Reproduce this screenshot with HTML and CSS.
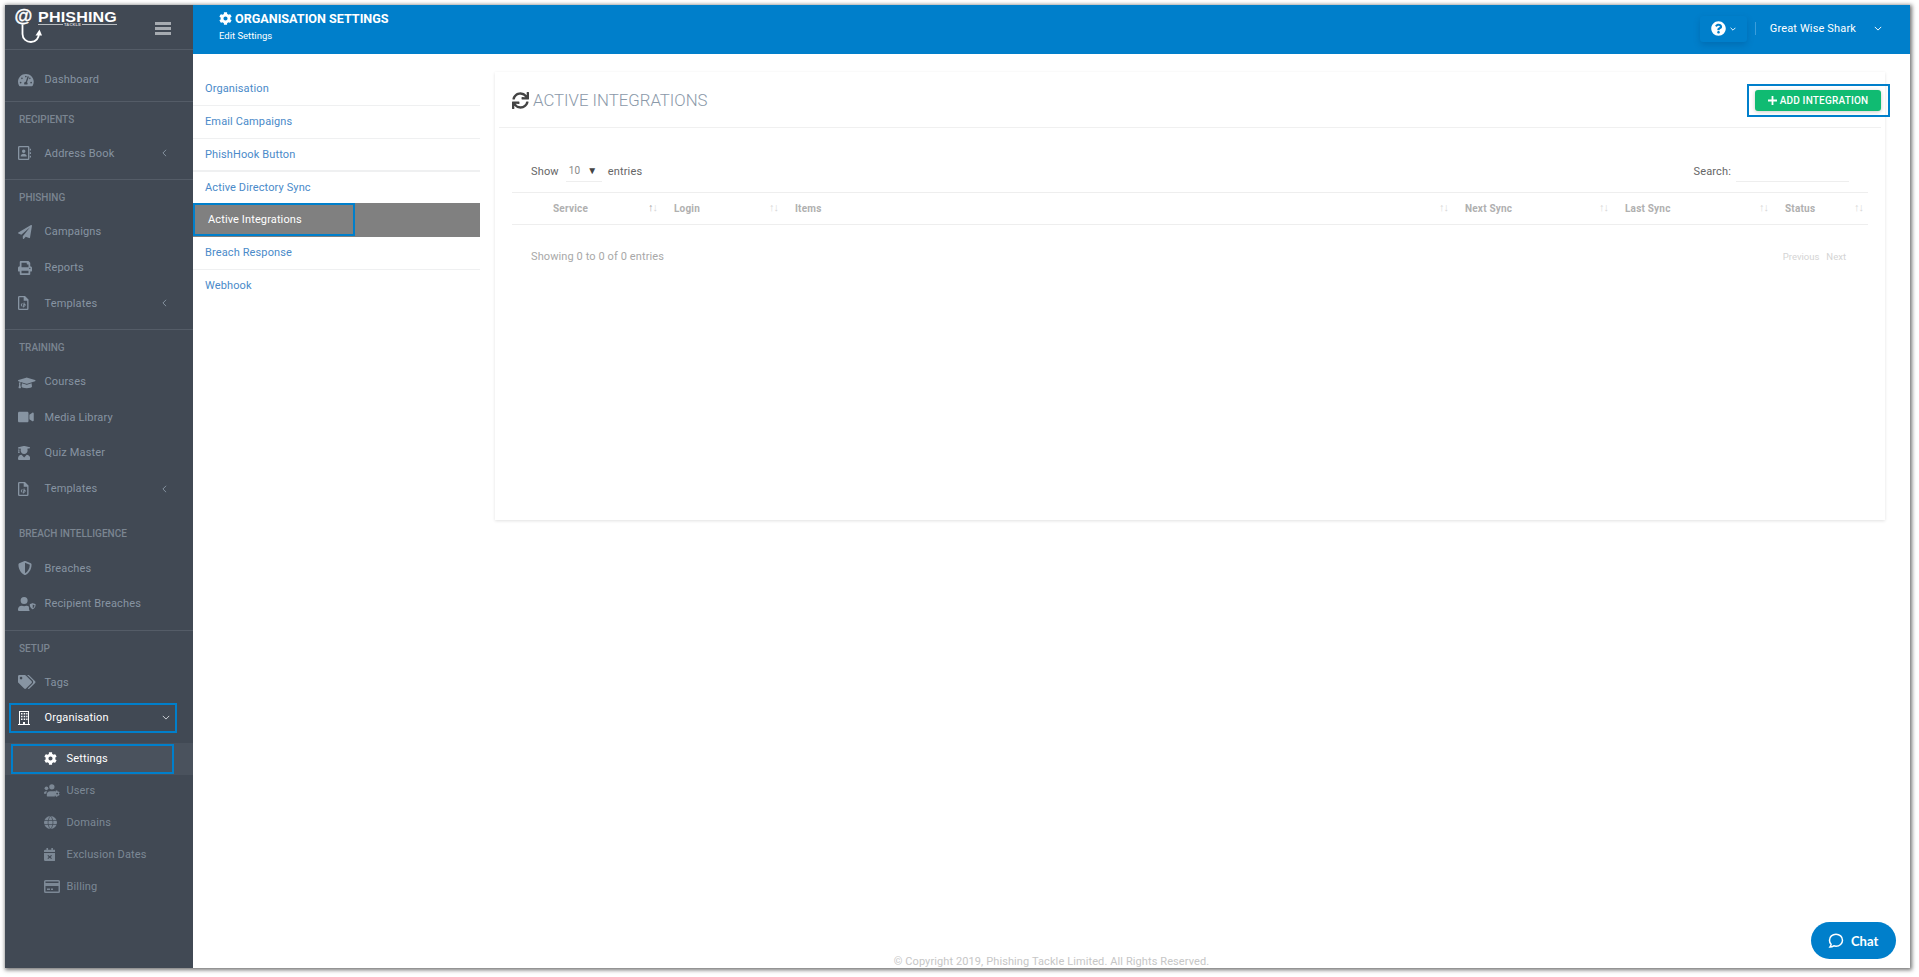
FILE: index.html
```html
<!DOCTYPE html>
<html lang="en">
<head>
<meta charset="utf-8">
<title>Organisation Settings</title>
<link rel="stylesheet" href="styles.css">
</head>
<body>
<div class="window">
  <aside class="sidebar">
    <div class="brand">
      <svg class="logo" viewBox="0 0 105 40" width="105" height="40">
        <text x="-0.500" y="13.500" class="logo-at" textLength="18" lengthAdjust="spacingAndGlyphs">@</text>
        <path d="M7.500 16.500v9.500c0 5 4 8 8.500 8 5 0 8-4 8-9" class="logo-hook"/>
        <path d="M20.500 27.500l4-6 2.500 6z" class="logo-barb"/>
        <text x="23" y="14" class="logo-name" textLength="79" lengthAdjust="spacingAndGlyphs">PHISHING</text>
        <path d="M23 16.500h25M67 16.500h35" class="logo-rule"/>
        <text x="49" y="18" class="logo-sub" textLength="17" lengthAdjust="spacingAndGlyphs">TACKLE</text>
      </svg>
      <div class="burger"><span></span><span></span><span></span></div>
    </div>

    <div class="group group-first">
      <a class="item"><span class="ic"><svg viewBox="0 0 576 512"><path d="M288 32C128.940 32 0 160.940 0 320c0 52.800 14.250 102.260 39.060 144.800 5.610 9.620 16.300 15.200 27.440 15.200h443c11.140 0 21.830-5.580 27.440-15.200C561.750 422.260 576 372.800 576 320c0-159.060-128.940-288-288-288zm0 64c14.710 0 26.580 10.130 30.320 23.650-1.110 2.260-2.640 4.230-3.450 6.670l-9.220 27.670c-5.130 3.490-10.970 6.010-17.640 6.010-17.670 0-32-14.330-32-32S270.330 96 288 96zM96 384c-17.670 0-32-14.330-32-32s14.330-32 32-32 32 14.330 32 32-14.330 32-32 32zm48-160c-17.670 0-32-14.330-32-32s14.330-32 32-32 32 14.330 32 32-14.330 32-32 32zm246.770-72.410l-61.330 184C343.130 347.330 352 364.540 352 384c0 11.720-3.380 22.550-8.880 32H232.880c-5.500-9.450-8.880-20.280-8.880-32 0-33.940 26.500-61.430 59.900-63.590l61.340-184.010c4.170-12.560 17.730-19.450 30.360-15.170 12.570 4.190 19.350 17.790 15.170 30.360zm14.660 57.200l15.520-46.550c3.470-1.290 7.130-2.230 11.050-2.230 17.670 0 32 14.330 32 32s-14.330 32-32 32c-11.380-.01-20.890-6.280-26.570-15.220zM480 384c-17.670 0-32-14.330-32-32s14.330-32 32-32 32 14.330 32 32-14.330 32-32 32z"/></svg></span>Dashboard</a>
    </div>

    <div class="group">
      <div class="label">RECIPIENTS</div>
      <a class="item"><span class="ic"><svg viewBox="0 0 15 16"><path fill-rule="evenodd" d="M1.500 0h10A1.500 1.500 0 0 1 13 1.500v13a1.500 1.500 0 0 1-1.500 1.500h-10A1.500 1.500 0 0 1 0 14.500v-13A1.500 1.500 0 0 1 1.500 0zm.2 1.500a.3.3 0 0 0-.2.200v12.600c0 .1.100.2.200.2h9.600c.1 0 .2-.1.200-.2V1.700a.3.3 0 0 0-.2-.2zM6.500 4a2 2 0 1 1 0 4 2 2 0 0 1 0-4zM3 12c0-2 1.500-3.200 3.500-3.200S10 10 10 12zM13.500 3H15v2h-1.500zm0 4H15v2h-1.500zm0 4H15v2h-1.500z"/></svg></span>Address Book<svg class="chev" viewBox="0 0 6 10"><path d="M5 1L1 5l4 4"/></svg></a>
    </div>

    <div class="group">
      <div class="label">PHISHING</div>
      <a class="item"><span class="ic"><svg viewBox="0 0 512 512"><path d="M476 3.200L12.500 270.600c-18.100 10.400-15.800 35.600 2.200 43.200L121 358.400l287.300-253.200c5.500-4.900 13.300 2.600 8.600 8.300L176 407v80.500c0 23.600 28.500 32.900 42.500 15.800L282 426l124.600 52.200c14.200 6 30.400-2.900 33-18.200l72-432C515 7.800 493.300-6.800 476 3.200z"/></svg></span>Campaigns</a>
      <a class="item"><span class="ic"><svg viewBox="0 0 512 512"><path d="M448 192V77.250c0-8.490-3.370-16.620-9.370-22.630L393.370 9.370c-6-6-14.140-9.370-22.630-9.370H96C78.330 0 64 14.330 64 32v160c-35.350 0-64 28.650-64 64v112c0 8.840 7.160 16 16 16h48v96c0 17.670 14.330 32 32 32h320c17.670 0 32-14.330 32-32v-96h48c8.840 0 16-7.160 16-16V256c0-35.350-28.650-64-64-64zm-64 256H128v-96h256v96zm0-224H128V64h192v48c0 8.840 7.160 16 16 16h48v96zm48 72c-13.250 0-24-10.750-24-24 0-13.260 10.750-24 24-24s24 10.740 24 24c0 13.250-10.750 24-24 24z"/></svg></span>Reports</a>
      <a class="item"><span class="ic"><svg viewBox="0 0 12 16"><path fill-rule="evenodd" d="M1.500 0H8l4 4v10.500a1.500 1.500 0 0 1-1.500 1.500h-9A1.500 1.500 0 0 1 0 14.500v-13A1.500 1.500 0 0 1 1.500 0zm0 1.500v13h9V5.500H6.500v-4zM4.500 8L3 10.200l1.500 2.200.8-.6-1-1.600 1-1.600zm3 0l-.8.600 1 1.600-1 1.600.8.600L9 10.200zM6.500 7.500l-1 5.500h1l1-5.500z"/></svg></span>Templates<svg class="chev" viewBox="0 0 6 10"><path d="M5 1L1 5l4 4"/></svg></a>
    </div>

    <div class="group">
      <div class="label">TRAINING</div>
      <a class="item"><span class="ic"><svg viewBox="0 0 640 512"><path d="M622.300 185.400L341.500 99.100a72 72 0 0 0-43 0L17.700 185.400c-23.600 7.200-23.600 38 0 45.200l49 15c-10.700 13.300-17.300 29.500-18 47.300C38.900 298.600 32 308.500 32 320c0 10.400 5.700 19.200 14 24.800L20.400 460.400C18.200 470.500 25.900 480 36.200 480h55.600c10.300 0 18-9.500 15.800-19.600L82 344.800c8.300-5.600 14-14.400 14-24.800 0-11.200-6.500-20.700-15.800-26.300.8-15.200 8.500-28.500 20.300-37L298.500 317c14 4.300 29 4.300 43 0l280.800-86.400c23.600-7.200 23.600-38 0-45.200zM352 347.600a72 72 0 0 1-64 0l-145-44.600L128 416c0 35.300 86 64 192 64s192-28.700 192-64l-15-113z"/></svg></span>Courses</a>
      <a class="item"><span class="ic"><svg viewBox="0 0 576 512"><path d="M336.200 64H47.800C21.400 64 0 85.400 0 111.800v288.400C0 426.600 21.400 448 47.800 448h288.400c26.400 0 47.800-21.400 47.800-47.800V111.800c0-26.400-21.400-47.800-47.800-47.800zm189.400 37.700L416 177.300v157.400l109.600 75.500c21.200 14.600 50.400-.3 50.400-25.800V127.500c0-25.400-29.100-40.400-50.400-25.800z"/></svg></span>Media Library</a>
      <a class="item"><span class="ic"><svg viewBox="0 0 448 512"><path d="M319.400 320.600L224 416l-95.400-95.400C57.100 323.700 0 382.200 0 454.400v9.600c0 26.500 21.500 48 48 48h352c26.500 0 48-21.500 48-48v-9.600c0-72.200-57.100-130.700-128.600-133.800zM13.600 79.800l6.400 1.500v58.400c-7 4.200-12 11.500-12 20.300 0 8.400 4.600 15.400 11.100 19.700L3.500 242c-1.700 6.900 2.100 14 7.600 14h41.800c5.500 0 9.300-7.100 7.600-14l-15.600-62.300C51.400 175.400 56 168.400 56 160c0-8.800-5-16.100-12-20.300V87.100l66 15.900c-8.600 17.200-14 36.400-14 57 0 70.700 57.300 128 128 128s128-57.300 128-128c0-20.600-5.300-39.800-14-57l96.300-23.200c18.200-4.400 18.200-27.100 0-31.500l-190.400-46c-13-3.100-26.700-3.100-39.700 0L13.600 48.200c-18.100 4.400-18.100 27.200 0 31.600z"/></svg></span>Quiz Master</a>
      <a class="item"><span class="ic"><svg viewBox="0 0 12 16"><path fill-rule="evenodd" d="M1.500 0H8l4 4v10.500a1.500 1.500 0 0 1-1.500 1.500h-9A1.500 1.500 0 0 1 0 14.500v-13A1.500 1.500 0 0 1 1.500 0zm0 1.500v13h9V5.500H6.500v-4zM4.500 8L3 10.200l1.500 2.200.8-.6-1-1.600 1-1.600zm3 0l-.8.600 1 1.600-1 1.600.8.600L9 10.200zM6.500 7.500l-1 5.500h1l1-5.500z"/></svg></span>Templates<svg class="chev" viewBox="0 0 6 10"><path d="M5 1L1 5l4 4"/></svg></a>
      <div class="label label-late">BREACH INTELLIGENCE</div>
      <a class="item"><span class="ic"><svg viewBox="0 0 512 512"><path d="M466.500 83.700l-192-80a48.150 48.150 0 0 0-36.900 0l-192 80C27.700 91.100 16 108.600 16 128c0 198.500 114.500 335.700 221.500 380.300 11.800 4.900 25.100 4.900 36.900 0C360.100 472.600 496 349.300 496 128c0-19.400-11.700-36.900-29.500-44.300zM256.100 446.300l-.1-381 175.900 73.300c-3.300 151.400-82.100 261.100-175.800 307.700z"/></svg></span>Breaches</a>
      <a class="item"><span class="ic"><svg viewBox="0 0 640 512"><path d="M224 256a128 128 0 1 0 0-256 128 128 0 0 0 0 256zm96 64h-17c-24 11-50 16-79 16s-55-5-79-16h-17C57 320 0 377 0 448v16c0 26 21 48 48 48h352c10 0 20-3 28-9-17-24-28-62-28-119v-30c-20-21-48-34-80-34z"/><path d="M530 224l-90 36c-6 3-10 8-10 15 0 89 51 151 100 173 5 2 10 2 15 0 49-22 100-84 100-173 0-7-4-12-10-15l-90-36c-5-2-10-2-15 0zm8 52l67 27c-3 59-34 93-67 110z"/></svg></span>Recipient Breaches</a>
    </div>

    <div class="group group-last">
      <div class="label">SETUP</div>
      <a class="item"><span class="ic"><svg viewBox="0 0 640 512"><path d="M497.941 225.941L286.059 14.059A48 48 0 0 0 252.118 0H48C21.490 0 0 21.490 0 48v204.118a48 48 0 0 0 14.059 33.941l211.882 211.882c18.744 18.745 49.136 18.746 67.882 0l204.118-204.118c18.745-18.745 18.745-49.137 0-67.882zM112 160c-26.510 0-48-21.490-48-48s21.490-48 48-48 48 21.490 48 48-21.490 48-48 48zm513.941 133.823L421.823 497.941c-18.745 18.745-49.137 18.745-67.882 0l-.36-.36L527.640 323.522c16.999-16.999 26.360-39.600 26.360-63.640s-9.362-46.641-26.360-63.640L331.397 0h48.721a48 48 0 0 1 33.941 14.059l211.882 211.882c18.745 18.745 18.745 49.137 0 67.882z"/></svg></span>Tags</a>
      <a class="item item-open"><span class="ic"><svg viewBox="0 0 12 14"><path fill-rule="evenodd" d="M1 0h10v13h1v1H0v-1h1zm1 1v12h3v-2h2v2h3V1zm1 1h1.500v1.500H3zm2.700 0h1.500v1.500H5.700zM8.200 2h1.300v1.500H8.200zM3 4.700h1.500v1.500H3zm2.700 0h1.500v1.500H5.700zm2.500 0h1.300v1.500H8.200zM3 7.400h1.500v1.500H3zm2.700 0h1.500v1.500H5.700zm2.500 0h1.300v1.500H8.200z"/></svg></span>Organisation<svg class="chev chev-down" viewBox="0 0 10 6"><path d="M1 1l4 4 4-4"/></svg></a>
      <div class="subnav">
        <a class="sub sub-active"><span class="ic"><svg viewBox="0 0 512 512"><path d="M487.400 315.700l-42.600-24.600c4.300-23.200 4.300-47 0-70.200l42.600-24.600c4.900-2.800 7.100-8.600 5.500-14-11.100-35.600-30-67.800-54.700-94.600-3.800-4.100-10-5.100-14.800-2.300L380.800 110c-17.900-15.400-38.500-27.300-60.800-35.100V25.800c0-5.600-3.900-10.500-9.400-11.700-36.700-8.200-74.300-7.800-109.200 0-5.500 1.200-9.400 6.100-9.400 11.700V75c-22.200 7.900-42.800 19.800-60.800 35.100L88.700 85.500c-4.900-2.800-11-1.900-14.800 2.300-24.700 26.700-43.600 58.900-54.700 94.600-1.700 5.400.6 11.200 5.500 14L67.300 221c-4.300 23.200-4.300 47 0 70.200l-42.600 24.600c-4.900 2.800-7.100 8.600-5.500 14 11.100 35.600 30 67.800 54.700 94.600 3.800 4.100 10 5.100 14.800 2.300l42.600-24.600c17.900 15.400 38.500 27.300 60.800 35.100v49.200c0 5.600 3.900 10.500 9.400 11.700 36.700 8.200 74.300 7.800 109.200 0 5.500-1.200 9.400-6.100 9.400-11.700v-49.200c22.200-7.900 42.800-19.800 60.800-35.100l42.600 24.600c4.900 2.800 11 1.900 14.800-2.300 24.700-26.700 43.600-58.900 54.700-94.600 1.500-5.500-.7-11.300-5.600-14.100zM256 336c-44.100 0-80-35.900-80-80s35.900-80 80-80 80 35.900 80 80-35.900 80-80 80z"/></svg></span>Settings</a>
        <a class="sub"><span class="ic"><svg viewBox="0 0 640 512"><circle cx="96" cy="170" r="72"/><path d="M0 372c0-50 30-86 70-86h50c-18 25-28 60-28 96H20C8 382 0 380 0 372z"/><circle cx="310" cy="110" r="104"/><path d="M110 440c0-85 50-150 130-150h160c20 0 35 3 50 10-30 40-40 100-20 192H130c-12 0-20-10-20-20z"/><path d="M610 407l-20-11c2-12 2-24 0-36l20-11c3-2 4-4 3-7-5-18-15-34-28-48-2-2-5-2-7-1l-20 12c-9-8-19-14-30-18v-23c0-3-2-5-5-6-18-4-37-4-55 0-3 1-5 3-5 6v23c-11 4-21 10-30 18l-20-12c-2-1-5-1-7 1-13 14-23 30-28 48-1 3 0 5 3 7l20 11c-2 12-2 24 0 36l-20 11c-3 2-4 4-3 7 5 18 15 34 28 48 2 2 5 2 7 1l20-12c9 8 19 14 30 18v23c0 3 2 5 5 6 18 4 37 4 55 0 3-1 5-3 5-6v-23c11-4 21-10 30-18l20 12c2 1 5 1 7-1 13-14 23-30 28-48 1-3 0-5-3-7zm-90 9a38 38 0 1 1 0-76 38 38 0 0 1 0 76z"/></svg></span>Users</a>
        <a class="sub"><span class="ic"><svg viewBox="0 0 16 16"><path d="M8 0a8 8 0 1 1 0 16A8 8 0 0 1 8 0z"/><path class="globe-lines" d="M0 5.500h16M0 10.500h16M8 0c-4 4-4 12 0 16M8 0c4 4 4 12 0 16"/></svg></span>Domains</a>
        <a class="sub"><span class="ic"><svg viewBox="0 0 14 16"><path fill-rule="evenodd" d="M3 0h2v2h4V0h2v2h1.500A1.500 1.500 0 0 1 14 3.500V5H0V3.500A1.500 1.500 0 0 1 1.500 2H3zM0 6h14v8.500a1.500 1.500 0 0 1-1.500 1.500h-11A1.500 1.500 0 0 1 0 14.500zm5.200 2.500L4.200 9.500 6 11l-1.800 1.500 1 1L7 12l1.800 1.500 1-1L8 11l1.800-1.500-1-1L7 10z"/></svg></span>Exclusion Dates</a>
        <a class="sub"><span class="ic"><svg viewBox="0 0 16 13"><path fill-rule="evenodd" d="M1.500 0h13A1.500 1.500 0 0 1 16 1.500v10a1.500 1.500 0 0 1-1.500 1.500h-13A1.500 1.500 0 0 1 0 11.500v-10A1.500 1.500 0 0 1 1.500 0zm0 1.500V3h13V1.500zm0 4.500v5.500h13V6zM3 8.500h3V10H3zm4 0h2V10H7z"/></svg></span>Billing</a>
      </div>
    </div>
  </aside>

  <div class="main">
    <header class="topbar">
      <div class="top-title">
        <h1><svg viewBox="0 0 512 512"><path d="M487.400 315.700l-42.600-24.600c4.300-23.200 4.300-47 0-70.200l42.600-24.600c4.900-2.800 7.100-8.600 5.500-14-11.100-35.600-30-67.800-54.700-94.600-3.800-4.100-10-5.100-14.800-2.300L380.800 110c-17.900-15.400-38.500-27.300-60.800-35.100V25.800c0-5.600-3.900-10.500-9.400-11.700-36.700-8.200-74.300-7.800-109.200 0-5.500 1.200-9.400 6.100-9.400 11.700V75c-22.200 7.900-42.800 19.800-60.800 35.100L88.700 85.500c-4.900-2.800-11-1.900-14.800 2.300-24.700 26.700-43.600 58.900-54.700 94.600-1.700 5.400.6 11.200 5.500 14L67.300 221c-4.300 23.200-4.300 47 0 70.200l-42.600 24.600c-4.900 2.800-7.100 8.600-5.500 14 11.100 35.600 30 67.800 54.700 94.600 3.800 4.100 10 5.100 14.800 2.300l42.600-24.600c17.900 15.400 38.500 27.300 60.800 35.100v49.200c0 5.600 3.900 10.500 9.400 11.700 36.700 8.200 74.300 7.800 109.200 0 5.500-1.200 9.400-6.100 9.400-11.700v-49.200c22.200-7.900 42.800-19.800 60.800-35.100l42.600 24.600c4.900 2.800 11 1.900 14.800-2.300 24.700-26.700 43.600-58.900 54.700-94.600 1.500-5.500-.7-11.300-5.600-14.100zM256 336c-44.100 0-80-35.900-80-80s35.900-80 80-80 80 35.900 80 80-35.900 80-80 80z"/></svg>ORGANISATION SETTINGS</h1>
        <p>Edit Settings</p>
      </div>
      <div class="top-right">
        <div class="help"><svg class="help-q" viewBox="0 0 512 512"><path d="M504 256c0 136.997-111.043 248-248 248S8 392.997 8 256C8 119.083 119.043 8 256 8s248 111.083 248 248zM262.655 90c-54.497 0-89.255 22.957-116.549 63.758-3.536 5.286-2.353 12.415 2.715 16.258l34.699 26.310c5.205 3.947 12.621 3.008 16.665-2.122 17.864-22.658 30.113-35.797 57.303-35.797 20.429 0 45.698 13.148 45.698 32.958 0 14.976-12.363 22.667-32.534 33.976C247.128 238.528 216 254.941 216 296v4c0 6.627 5.373 12 12 12h56c6.627 0 12-5.373 12-12v-1.333c0-28.462 83.186-29.647 83.186-106.667 0-58.002-60.165-102-116.531-102zM256 338c-25.365 0-46 20.635-46 46 0 25.364 20.635 46 46 46s46-20.636 46-46c0-25.365-20.635-46-46-46z"/></svg><svg class="help-chev" viewBox="0 0 10 6"><path d="M1 1l4 4 4-4"/></svg></div>
        <span class="user">Great Wise Shark</span>
        <svg class="user-chev" viewBox="0 0 10 6"><path d="M1 1l4 4 4-4"/></svg>
      </div>
    </header>

    <div class="content">
      <nav class="settings-nav">
        <a>Organisation</a>
        <a>Email Campaigns</a>
        <a class="thick">PhishHook Button</a>
        <a class="plain">Active Directory Sync</a>
        <a class="active"><span>Active Integrations</span></a>
        <a>Breach Response</a>
        <a class="plain">Webhook</a>
      </nav>

      <section class="card">
        <div class="card-head">
          <h2><svg viewBox="0 0 512 512"><path d="M440.650 12.570l4 82.770A247.160 247.160 0 0 0 255.830 8C134.730 8 33.910 94.920 12.290 209.820A12 12 0 0 0 24.090 224h49.050a12 12 0 0 0 11.670-9.260 175.910 175.910 0 0 1 317-56.940l-101.460-4.860a12 12 0 0 0-12.570 12v47.410a12 12 0 0 0 12 12H500a12 12 0 0 0 12-12V12a12 12 0 0 0-12-12h-47.370a12 12 0 0 0-11.980 12.570zM255.830 432a175.610 175.610 0 0 1-146-77.800l101.800 4.870a12 12 0 0 0 12.570-12v-47.400a12 12 0 0 0-12-12H12a12 12 0 0 0-12 12V500a12 12 0 0 0 12 12h47.350a12 12 0 0 0 12-12.600l-4.150-82.570A247.170 247.170 0 0 0 255.830 504c121.110 0 221.930-86.920 243.550-201.820a12 12 0 0 0-11.800-14.180h-49.050a12 12 0 0 0-11.670 9.260A175.860 175.860 0 0 1 255.830 432z"/></svg>ACTIVE INTEGRATIONS</h2>
          <button class="add"><svg viewBox="0 0 10 10"><path d="M4 0h2v4h4v2H6v4H4V6H0V4h4z"/></svg>ADD INTEGRATION</button>
        </div>
        <div class="card-body">
          <div class="controls">
            <div class="length">Show<span class="select"><span>10</span><i>▼</i></span>entries</div>
            <div class="search">Search:<span class="search-input"></span></div>
          </div>
          <div class="table-head">
            <div class="th th-first"><span>Service</span><span class="sort"><b>↑</b><em>↓</em></span></div>
            <div class="th"><span>Login</span><span class="sort"><em>↑</em><em>↓</em></span></div>
            <div class="th"><span>Items</span><span class="sort"><em>↑</em><em>↓</em></span></div>
            <div class="th"><span>Next Sync</span><span class="sort"><em>↑</em><em>↓</em></span></div>
            <div class="th"><span>Last Sync</span><span class="sort"><em>↑</em><em>↓</em></span></div>
            <div class="th"><span>Status</span><span class="sort"><em>↑</em><em>↓</em></span></div>
          </div>
          <div class="table-foot">
            <span class="info">Showing 0 to 0 of 0 entries</span>
            <span class="pager"><span>Previous</span><span>Next</span></span>
          </div>
        </div>
      </section>
    </div>
    <footer class="copy">© Copyright 2019, Phishing Tackle Limited. All Rights Reserved.</footer>
  </div>
</div>
<button class="chat"><svg viewBox="0 0 16 16"><path d="M8 1.200c3.600 0 6.500 2.600 6.500 6s-2.900 6-6.500 6c-.8 0-1.500-.1-2.200-.4-1 .7-2.300 1.200-3.800 1.200.6-.8 1-1.600 1.100-2.600C1.900 10.300 1.500 8.800 1.500 7.200c0-3.400 2.900-6 6.500-6z"/></svg>Chat</button>
</body>
</html>
```

FILE: styles.css
```css
* { box-sizing: border-box; }
html, body { margin: 0; height: 100%; }
body {
  width: 1919px;
  height: 977px;
  padding: 5px 9px 9px 5px;
  background: #fff;
  font-family: Roboto, "Liberation Sans", sans-serif;
  overflow: hidden;
  position: relative;
}
a { display: block; text-decoration: none; }
svg { display: block; }

.window {
  display: flex;
  height: 963px;
  background: #fff;
  box-shadow: 1px 1px 4px 1px rgba(0,0,0,.55);
}

/* sidebar */
.sidebar {
  width: 188px;
  flex: none;
  background: #414954;
  color: #8794a2;
  font-size: 11px;
  letter-spacing: .15px;
}
.brand {
  height: 45px;
  display: flex;
  align-items: flex-start;
  border-bottom: 1px solid #545c67;
  position: relative;
  padding: 3px 0 0 10px;
}
.logo { flex: none; overflow: visible; }
.logo-at { font: 700 18px "Liberation Sans", sans-serif; fill: #fff; stroke: #fff; stroke-width: .3; }
.logo-hook { fill: none; stroke: #fff; stroke-width: 1.800; }
.logo-barb { fill: #fff; }
.logo-name { font: 700 14px "Liberation Sans", sans-serif; fill: #fff; }
.logo-rule { stroke: #d8dadd; stroke-width: .8; fill: none; }
.logo-sub { font: 700 3.500px "Liberation Sans", sans-serif; fill: #cfd2d6; }
.burger { margin: 14px 0 0 35px; width: 16px; display: flex; flex-direction: column; gap: 2px; }
.burger span { height: 3px; background: #a6abb1; }

.group { padding: 7px 0 8px; border-bottom: 1px solid #545c67; }
.group-first { padding: 12px 0 3px; }
.group-last { border-bottom: 0; }
.label {
  height: 21px;
  line-height: 21px;
  margin-bottom: 6px;
  padding-left: 14px;
  font-size: 10px;
  font-weight: 500;
  letter-spacing: 0;
  color: #7b8591;
}
.label-late { margin-top: 17px; margin-bottom: 6px; }
.item {
  height: 35.600px;
  display: flex;
  align-items: center;
  padding: 0 0 0 13px;
  color: #8794a2;
}
.ic { flex: none; width: 26.500px; height: 16px; display: flex; justify-content: flex-start; align-items: center; }
.ic svg { flex: none; width: auto; height: 14px; fill: currentColor; }
.chev { margin-left: auto; margin-right: 26px; width: 5px; height: 8px; fill: none; stroke: #8794a2; stroke-width: 1.200; }
.chev-down { width: 8px; height: 5px; margin-right: 23px; stroke: #d0d4d8; }
.item-open { color: #fff; position: relative; }
.item-open::after { content: ""; position: absolute; left: 4px; right: 16px; top: 3px; bottom: 3px; border: 2px solid #007fcb; }

.subnav { margin-top: 7px; }
.sub {
  height: 32px;
  display: flex;
  align-items: center;
  padding-left: 39px;
  color: #7c8895;
  position: relative;
}
.sub .ic { width: 22.500px; }
.sub .ic svg { height: 13px; }
.sub-active { background: #4a525d; color: #fff; }
.sub-active::after { content: ""; position: absolute; left: 6px; right: 19px; top: 1px; bottom: 1px; border: 2px solid #007fcb; }
.globe-lines { fill: none; stroke: #414954; stroke-width: .9; }

/* main */
.main { flex: 1; min-width: 0; display: flex; flex-direction: column; position: relative; }
.topbar {
  height: 49px;
  flex: none;
  background: #007fcb;
  color: #fff;
  display: flex;
  justify-content: space-between;
  padding-left: 26px;
}
.top-title h1 {
  margin: 6px 0 0;
  display: flex;
  align-items: center;
  font-size: 12.600px;
  font-weight: 700;
  line-height: 15px;
}
.top-title h1 svg { width: 13px; height: 13px; fill: #fff; margin-right: 3px; }
.top-title p { margin: 4px 0 0; font-size: 9.500px; line-height: 12px; }
.top-right { display: flex; align-items: center; height: 47px; color: #fff; }
.help {
  display: flex; align-items: center;
  width: 47px; height: 26px;
  padding-left: 11px;
  border-radius: 3px;
  box-shadow: 0 3px 6px rgba(0,60,110,.25);
}
.help-q { width: 15px; height: 15px; fill: #fff; }
.help-chev { width: 6px; height: 4px; margin-left: 4px; fill: none; stroke: #fff; stroke-width: 1.500; }
.user {
  margin-left: 8px;
  padding-left: 14px;
  border-left: 1px solid #3b9ddb;
  font-size: 11px;
  line-height: 13px;
  letter-spacing: .15px;
}
.user-chev { width: 8px; height: 5px; margin: 0 28px 0 18px; fill: none; stroke: #fff; stroke-width: 1.200; }

.content { flex: 1; display: flex; align-items: flex-start; min-height: 0; }
.settings-nav {
  width: 287px;
  flex: none;
  padding-top: 19px;
  font-size: 11px;
  letter-spacing: .12px;
}
.settings-nav a {
  height: 33px;
  line-height: 32px;
  padding-left: 12px;
  color: #4a8ac9;
  border-bottom: 1px solid #eff0f1;
}
.settings-nav a.thick { border-bottom: 2px solid #eff0f1; }
.settings-nav a.plain { border-bottom: 0; }
.settings-nav a.active {
  padding: 0;
  height: 34px;
  margin-top: -2.500px;
  background: #808080;
  color: #fff;
  border: 0;
  line-height: 33px;
}
.settings-nav a.active span {
  display: block;
  width: 162px;
  height: 33px;
  padding-left: 13px;
  border: 2px solid #007fcb;
  line-height: 30px;
}

.card {
  width: 1390px;
  height: 448px;
  margin: 18px 0 0 15px;
  flex: none;
  background: #fff;
  padding: 0 4px;
  box-shadow: 0 1px 3px rgba(0,0,0,.12);
}
.card-head {
  height: 56px;
  display: flex;
  justify-content: space-between;
  align-items: flex-start;
  border-bottom: 1px solid #f0f0f0;
  padding: 18px 0 0 13px;
}
.card-head h2 {
  margin: 0;
  display: flex;
  align-items: center;
  font-size: 16.800px;
  line-height: 20px;
  font-weight: 300;
  color: #8b99a9;
}
.card-head h2 svg { width: 17px; height: 17px; fill: #444; margin-right: 4px; }
.add {
  position: relative;
  width: 126px;
  height: 21px;
  margin: 0;
  border: 0;
  border-radius: 3px;
  background: #10bb72;
  color: #fff;
  font: 500 10px Roboto, sans-serif;
  letter-spacing: .2px;
  display: flex;
  align-items: center;
  justify-content: center;
  box-shadow: 0 1px 4px rgba(0,0,0,.2);
}
.add svg { width: 9px; height: 9px; fill: #fff; margin-right: 3px; }
.add::after { content: ""; position: absolute; left: -8px; right: -9px; top: -6px; bottom: -6px; border: 2px solid #007fcb; }

.card-body { padding: 0 13px; }
.controls {
  height: 64px;
  display: flex;
  justify-content: space-between;
  padding: 33.500px 19px 0;
  font-size: 11px;
  letter-spacing: .15px;
  color: #666;
}
.length { display: flex; align-items: flex-start; line-height: 20px; }
.select {
  width: 36px; height: 20px;
  margin: 0 6px 0 7px;
  padding-left: 3px;
  display: flex;
  justify-content: flex-start;
  border-bottom: 1px solid #eee;
  color: #888;
  font-size: 10px;
  line-height: 18px;
}
.select i { font-style: normal; font-size: 10px; color: #444; margin-left: 7px; }
.search { display: flex; line-height: 20px; }
.search-input { width: 113px; height: 20px; margin-left: 5px; border-bottom: 1px solid #eee; }
.table-head {
  height: 33px;
  display: grid;
  grid-template-columns: 150px 121px 670px 160px 160px 95px;
  border-top: 1px solid #eee;
  border-bottom: 1px solid #eee;
}
.th {
  display: flex;
  justify-content: space-between;
  align-items: center;
  padding: 0 5px 0 12px;
  font-size: 10px;
  font-weight: 700;
  letter-spacing: .2px;
  color: #b0b0b0;
}
.th-first { padding-left: 41px; }
.sort { font-size: 11px; font-weight: 400; display: flex; margin-top: -3px; letter-spacing: -1px; }
.sort b { font-weight: 400; color: #aaa; }
.sort em { font-style: normal; color: #d8d8d8; }
.table-foot {
  display: flex;
  justify-content: space-between;
  padding: 24px 19px 0;
  font-size: 11px;
  line-height: 16px;
  letter-spacing: .1px;
  color: #a8a8a8;
}
.pager { display: flex; gap: 7px; font-size: 9.500px; letter-spacing: 0; color: #d4d4d4; padding-right: 3px; }

.copy {
  position: absolute;
  left: 0; right: 0; bottom: 0;
  text-align: center;
  font-size: 11px;
  line-height: 13px;
  letter-spacing: .1px;
  color: #c6c6c6;
}
.chat {
  position: absolute;
  left: 1811px;
  top: 922px;
  width: 85px;
  height: 37px;
  border: 0;
  border-radius: 19px;
  background: #007fcb;
  color: #fff;
  font: 700 13px Lato, "Open Sans", sans-serif;
  display: flex;
  align-items: center;
  padding-left: 17px;
}
.chat svg { width: 16px; height: 16px; fill: none; stroke: #fff; stroke-width: 1.500; margin-right: 7px; }
```
